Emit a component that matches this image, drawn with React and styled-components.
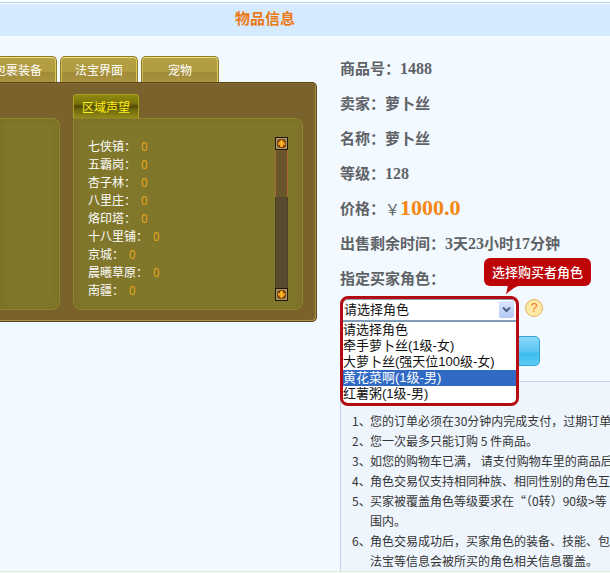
import React, { useState } from "react";
import styled, { createGlobalStyle } from "styled-components";

const GlobalStyle = createGlobalStyle`
  * {
    box-sizing: border-box;
  }

  body {
    margin: 0;
    background-color: #f2f9ff;
    font-family: "Noto Sans CJK SC", "Liberation Sans", sans-serif;
    font-size: 12px;
    overflow: hidden;
  }

  button, select {
    font-family: inherit;
  }
`;

const Header = styled.header`
  display: flex;
  border-top: 2px solid #f8fcff;
  background-color: #d6eaff;
`;

const HeaderInner = styled.div`
  flex: 1;
  padding: 0 0 3px 235px;
  border-top: 1px solid #b7d3ea;
  box-shadow: inset 0 1px 0 #fbfdff;
`;

const Title = styled.h1`
  margin: 0;
  color: #ec7a14;
  font-size: 15px;
  font-weight: 700;
  line-height: 30px;
`;

const Main = styled.main`
  display: flex;
  align-items: flex-start;
  border-bottom: 1px solid #e2e8d2;
`;

const Character = styled.section`
  flex: 0 0 317px;
  padding-top: 20px;
  overflow: hidden;
`;

const Tabs = styled.div`
  display: flex;
  gap: 3px;
  margin-left: -21px;
`;

const Tab = styled.button`
  width: 78px;
  height: 26px;
  padding: 0;
  border: 1px solid #8d7a2c;
  border-bottom: 0;
  border-radius: 5px 5px 0 0;
  background: linear-gradient(#b5a045 0, #b09b41 60%, #a18a38 62%, #aa943f 100%);
  box-shadow: inset 0 1px 0 #efe67c, inset -1px 0 0 #d8ca5c, inset 1px 0 0 #c8ba55;
  color: #fff;
  font-size: 12px;
  line-height: 24px;
`;

const Panel = styled.div`
  display: flex;
  align-items: flex-end;
  gap: 13px;
  height: 240px;
  padding: 0 13px 11px 0;
  border: 1px solid #57441a;
  border-left: 0;
  border-radius: 0 5px 5px 0;
  background-color: #79622b;
  box-shadow: inset -1px -1px 0 #a9944a, inset 0 1px 0 #87702f;
`;

const Box = styled.div`
  display: flex;
  justify-content: space-between;
  width: ${(props) => (props.$side ? "60px" : "100%")};
  height: 192px;
  padding: 18px 14px 0;
  border: 1px solid #8f8430;
  border-left-width: ${(props) => (props.$side ? "0" : "1px")};
  border-radius: ${(props) => (props.$side ? "0 8px 8px 0" : "0 8px 8px 8px")};
  background-color: #80772b;
  box-shadow: inset 0 0 6px #756d22;
`;

const Group = styled.div`
  flex: 1;
`;

const GroupTab = styled.button`
  display: block;
  width: 66px;
  height: 24px;
  padding: 0;
  border: 1px solid #aca321;
  border-bottom: 0;
  border-radius: 4px 4px 0 0;
  background: linear-gradient(#8f8a12 0, #7a7409 35%, #574a07 50%, #6f6a0b 65%, #938b1b 100%);
  color: #fff21c;
  font-size: 12px;
  line-height: 20px;
`;

const Places = styled.ul`
  margin: 0;
  padding: 0;
  list-style: none;
  color: #fff;
  line-height: 18px;
`;

const Points = styled.span`
  margin-left: 5px;
  color: #e3a41b;
`;

const Scroll = styled.div`
  display: flex;
  flex-direction: column;
  width: 13px;
  height: 164px;
  background-color: #574a2f;
  border: solid #4a3f27;
  border-width: 0 1px;
`;

const ScrollButton = styled.button`
  display: flex;
  height: 13px;
  margin: 0 -1px;
  padding: 0;
  border: 1px solid #1f1608;
  background-color: #b09a6c;
`;

const Thumb = styled.div`
  height: 47px;
  margin: 0 -1px;
  border: solid #a66a35;
  border-width: 0 1px;
  background-color: #6b552a;
`;

const Space = styled.div`
  flex: 1;
`;

const Detail = styled.section`
  flex: 1;
  min-width: 0;
  padding: 16px 0 0 23px;
  color: #5f6266;
`;

const Info = styled.dl`
  margin: 0;
`;

const Row = styled.div`
  display: flex;
  height: 35px;
  font-size: 15px;
  font-weight: 700;
  line-height: 32px;
  white-space: nowrap;

  dt, dd {
    margin: 0;
  }
`;

const Num = styled.span`
  font-family: "Liberation Serif", serif;
  font-size: 16px;
`;

const Price = styled.span`
  color: #f58613;
  font-family: "Liberation Serif", serif;
  font-size: 22px;
`;

const Yen = styled.span`
  font-weight: 400;
`;

const Field = styled.div`
  position: relative;
  height: 24px;
`;

const Dropdown = styled.div`
  position: absolute;
  top: -1px;
  left: 0;
  z-index: 1;
  width: 179px;
  border: 3px solid #b50c14;
  border-radius: 8px;
  background-color: #fff;
  box-shadow: inset 0 1px 0 #8c9fb0;
  color: #111;
  font-family: "Liberation Sans", "Noto Sans CJK SC", sans-serif;
  font-size: 13px;
  overflow: hidden;
`;

const SelectBox = styled.div`
  display: flex;
  align-items: center;
  height: 23px;
  padding-right: 2px;
  border-bottom: 2px solid #7f9db9;
`;

const Select = styled.select`
  appearance: none;
  flex: 1;
  min-width: 0;
  height: 21px;
  padding: 0 1px;
  border: 0;
  outline: none;
  background-color: transparent;
  color: #111;
  font-size: 13px;
`;

const Arrow = styled.span`
  display: flex;
  align-items: center;
  justify-content: center;
  width: 15px;
  height: 17px;
  border-radius: 2px;
  background: linear-gradient(#dbe6fe, #b4c8f5);
`;

const Options = styled.ul`
  margin: 0;
  padding: 0 0 1px;
  list-style: none;
`;

const Option = styled.li`
  height: 16px;
  line-height: 16px;
  background-color: ${(props) => (props.$active ? "#316ac5" : "#fff")};
  color: ${(props) => (props.$active ? "#fff" : "#111")};
  white-space: nowrap;
`;

const Callout = styled.div`
  position: absolute;
  top: -39px;
  left: 144px;
  z-index: 2;
  padding: 0 8px;
  border-radius: 6px;
  background-color: #bd0509;
  color: #fff;
  font-size: 13px;
  font-weight: 500;
  line-height: 28px;
  white-space: nowrap;

  svg {
    position: absolute;
    top: 27px;
    left: 21px;
  }
`;

const Help = styled.button`
  position: absolute;
  top: 2px;
  left: 185px;
  width: 18px;
  height: 18px;
  padding: 0;
  border: 1px solid #e6b35c;
  border-radius: 50%;
  background-color: #ffe9a6;
  color: #ef7d28;
  font-family: "Liberation Sans", sans-serif;
  font-size: 13px;
  line-height: 16px;
`;

const Buy = styled.button`
  display: block;
  width: 200px;
  height: 30px;
  margin: 15px 0;
  border: 1px solid #35a5d8;
  border-radius: 5px;
  background: linear-gradient(#8ad9f8 0, #5cc6f1 50%, #3cbcee 60%, #5accf3 100%);
`;

const Notice = styled.div`
  padding: 29px 0 0 11px;
  border-top: 1px solid #c0d3f0;
  border-left: 1px solid #c0d3f0;
  background-color: #eef5fd;
  overflow: hidden;
`;

const Rules = styled.ol`
  margin: 0;
  padding: 0;
  list-style: none;
  color: #333;
  font-size: 12px;
  line-height: 20px;
`;

const Rule = styled.li`
  display: grid;
  grid-template-columns: 18px 1fr;
  white-space: pre;
`;

const tabs = ["包裹装备", "法宝界面", "宠物"];

const places = [
  "七侠镇",
  "五霸岗",
  "杏子林",
  "八里庄",
  "烙印塔",
  "十八里铺",
  "京城",
  "晨曦草原",
  "南疆",
];

const roles = [
  "请选择角色",
  "牵手萝卜丝(1级-女)",
  "大萝卜丝(强天位100级-女)",
  "黄花菜啊(1级-男)",
  "红薯粥(1级-男)",
];

const rules = [
  "您的订单必须在30分钟内完成支付，过期订单",
  "您一次最多只能订购 5 件商品。",
  "如您的购物车已满， 请支付购物车里的商品后",
  "角色交易仅支持相同种族、相同性别的角色互",
  "买家被覆盖角色等级要求在“（0转）90级>等\n围内。",
  "角色交易成功后，买家角色的装备、技能、包\n法宝等信息会被所买的角色相关信息覆盖。",
];

function ScrollIcon({ down }) {
  return (
    <svg width="11" height="11" viewBox="0 0 11 11">
      <rect x="1" y="1" width="9" height="9" rx="3" fill="#7a4512" />
      <path
        d={down ? "M4 2h3v2h2v2L5.500 9.500 2 6V4h2z" : "M4 9h3V7h2V5L5.500 1.500 2 5v2h2z"}
        fill="#f39a14"
      />
      <path d="M5 3h1v5H5z" fill="#ffdc4a" />
    </svg>
  );
}

function App() {
  const [role, setRole] = useState(roles[0]);
  const [hover, setHover] = useState(3);

  return (
    <>
      <GlobalStyle />
      <Header>
        <HeaderInner>
          <Title>物品信息</Title>
        </HeaderInner>
      </Header>
      <Main>
        <Character>
          <Tabs>
            {tabs.map((tab) => (
              <Tab key={tab}>{tab}</Tab>
            ))}
          </Tabs>
          <Panel>
            <Box $side />
            <Group>
              <GroupTab>区域声望</GroupTab>
              <Box>
                <Places>
                  {places.map((place) => (
                    <li key={place}>
                      {place}：<Points>0</Points>
                    </li>
                  ))}
                </Places>
                <Scroll>
                  <ScrollButton aria-label="向上">
                    <ScrollIcon />
                  </ScrollButton>
                  <Thumb />
                  <Space />
                  <ScrollButton aria-label="向下">
                    <ScrollIcon down />
                  </ScrollButton>
                </Scroll>
              </Box>
            </Group>
          </Panel>
        </Character>
        <Detail>
          <Info>
            <Row>
              <dt>商品号：</dt>
              <dd><Num>1488</Num></dd>
            </Row>
            <Row>
              <dt>卖家：</dt>
              <dd>萝卜丝</dd>
            </Row>
            <Row>
              <dt>名称：</dt>
              <dd>萝卜丝</dd>
            </Row>
            <Row>
              <dt>等级：</dt>
              <dd><Num>128</Num></dd>
            </Row>
            <Row>
              <dt>价格：</dt>
              <dd><Yen>￥</Yen><Price>1000.0</Price></dd>
            </Row>
            <Row>
              <dt>出售剩余时间：</dt>
              <dd>
                <Num>3</Num>天<Num>23</Num>小时<Num>17</Num>分钟
              </dd>
            </Row>
          </Info>
          <Row>
            <label htmlFor="role">指定买家角色：</label>
          </Row>
          <Field>
            <Dropdown>
              <SelectBox>
                <Select id="role" value={role} onChange={(e) => setRole(e.target.value)}>
                  {roles.map((item) => (
                    <option key={item}>{item}</option>
                  ))}
                </Select>
                <Arrow>
                  <svg width="9" height="7" viewBox="0 0 9 7">
                    <path d="M1 1.500l3.500 3.500L8 1.500" fill="none" stroke="#4d6185" strokeWidth="2" />
                  </svg>
                </Arrow>
              </SelectBox>
              <Options role="listbox" aria-label="角色">
                {roles.map((item, i) => (
                  <Option
                    key={item}
                    role="option"
                    aria-selected={i === hover}
                    $active={i === hover}
                    onMouseEnter={() => setHover(i)}
                    onClick={() => setRole(item)}
                  >
                    {item}
                  </Option>
                ))}
              </Options>
            </Dropdown>
            <Callout>
              选择购买者角色
              <svg width="16" height="10" viewBox="0 0 16 10">
                <path d="M3 0h12Q7 3 1 9.500z" fill="#bd0509" />
              </svg>
            </Callout>
            <Help aria-label="帮助">?</Help>
          </Field>
          <Buy aria-label="购买" />
          <Notice>
            <Rules>
              {rules.map((rule, i) => (
                <Rule key={rule}>
                  <span>{i + 1}、</span>
                  <span>{rule}</span>
                </Rule>
              ))}
            </Rules>
          </Notice>
        </Detail>
      </Main>
    </>
  );
}

export default App;
